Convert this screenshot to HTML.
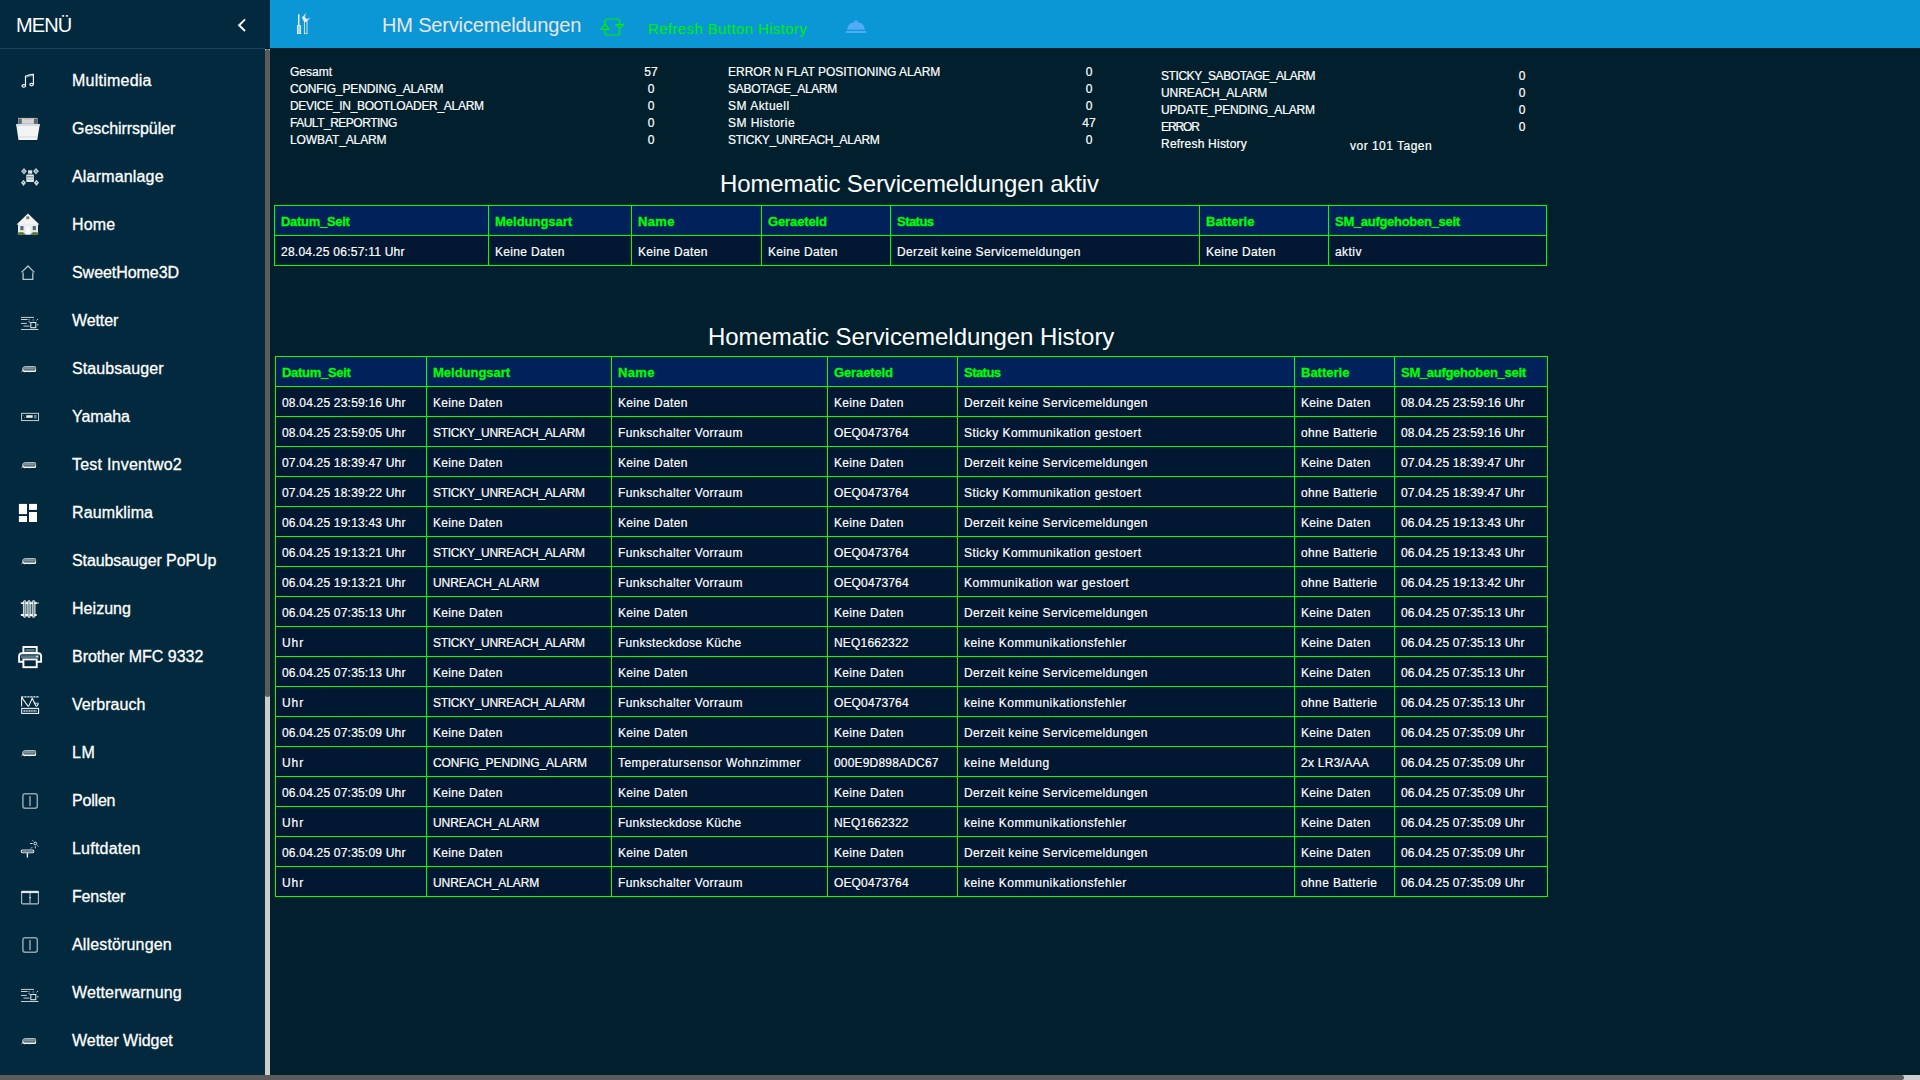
<!DOCTYPE html>
<html><head><meta charset="utf-8"><title>HM Servicemeldungen</title>
<style>
*{margin:0;padding:0;box-sizing:border-box}
html,body{width:1920px;height:1080px;overflow:hidden;background:#011f2d;font-family:"Liberation Sans",sans-serif;color:#fff}
.abs{position:absolute}
#side{position:absolute;left:0;top:0;width:265px;height:1075px;background:#02293d}
#sidehd{position:absolute;left:0;top:48px;width:265px;height:1px;background:#1d4257}
#menu{position:absolute;left:16px;top:13px;font-size:20px;line-height:24px;color:#fff;letter-spacing:-0.9px}
.mi{position:absolute;left:0;width:265px;height:48px}
.mi svg{position:absolute;left:0;top:4px}
.mi span{position:absolute;left:72px;top:16px;font-size:16px;line-height:18px;color:#fff;white-space:nowrap;-webkit-text-stroke:0.3px #fff}
#vs{position:absolute;left:265px;top:49px;width:5px;height:1026px;background:#cdcdcd}
#vsth{position:absolute;left:265px;top:49px;width:5px;height:648px;background:#5b5b5b;border-radius:2.5px}
#hs{position:absolute;left:0;top:1075px;width:1920px;height:5px;background:#cdcdcd}
#hsth{position:absolute;left:0;top:1075px;width:1904px;height:5px;background:#5b5b5b;border-radius:0 2.5px 2.5px 0}
#hdr{position:absolute;left:270px;top:0;width:1650px;height:48px;background:#0b97d6}
#title{position:absolute;left:382px;top:13px;font-size:20px;line-height:24px;color:#e8e6e6;white-space:nowrap}
#refr{position:absolute;left:648px;top:19px;font-size:15px;line-height:20px;color:#00f000;white-space:nowrap}
.sl{position:absolute;font-size:12px;line-height:17px;white-space:nowrap;color:#fff;-webkit-text-stroke:0.2px #fff}
.tt{position:absolute;font-size:24px;line-height:28px;white-space:nowrap;color:#fff}
.tbl{position:absolute}
.tbl div{position:absolute}
.thbg{background:#002159}
.tdbg{background:#021731}
.hl{left:0;height:1px;background:#00ff00}
.vl{top:0;width:1px;background:#00ff00}
.th{font-size:13px;font-weight:bold;color:#00ff00;line-height:30px;white-space:nowrap;-webkit-text-stroke:0.3px #00ff00}
.td{font-size:12px;color:#fff;line-height:30px;white-space:nowrap;-webkit-text-stroke:0.2px #fff}
</style></head><body>

<div id="side">
<div id="menu">MENÜ</div>
<svg class="abs" style="left:234px;top:16px" width="16" height="18" viewBox="0 0 16 18"><path d="M11 3.4L5.1 9.2L11 15" fill="none" stroke="#fff" stroke-width="1.9"/></svg>
<div id="sidehd"></div>
<div class="mi" style="top:56px"><svg width="40" height="40" viewBox="0 0 40 40"><g fill="none" stroke="#f2f5f7" stroke-width="1.2"><path d="M25.5 25.4V16.2Q29.5 14.6 33.4 14.4V24.2"/><ellipse cx="23.8" cy="25.9" rx="1.8" ry="1.2"/><ellipse cx="31.6" cy="24.6" rx="1.8" ry="1.2"/></g><path d="M26 17.3Q29.5 15.8 33 15.6" stroke="#9fb0b9" stroke-width="0.8" fill="none"/></svg><span style="letter-spacing:0.233px;">Multimedia</span></div>
<div class="mi" style="top:104px"><svg width="40" height="40" viewBox="0 0 40 40"><rect x="18" y="9.9" width="19.7" height="6.4" fill="#9ca1a6"/><rect x="21.8" y="10.4" width="12" height="5.2" fill="#d3d6d9"/><rect x="18.6" y="11" width="3" height="4.8" fill="#5f656b"/><rect x="34" y="11" width="3" height="4.8" fill="#5f656b"/><rect x="24" y="10.6" width="7" height="0.8" fill="#d9a0a8"/><path d="M16.1 16.1H39.9L37.2 32H18.5Z" fill="#f3f4f5"/><path d="M16.2 16.1H39.8L39.5 17.9H16.5Z" fill="#d9dcde"/><rect x="18.2" y="28.3" width="19.2" height="1.3" fill="#dcdee0"/></svg><span style="letter-spacing:-0.054px;">Geschirrspüler</span></div>
<div class="mi" style="top:152px"><svg width="40" height="40" viewBox="0 0 40 40"><g fill="#dfe5e8"><rect x="26.3" y="18.5" width="7.6" height="7.4" rx="0.5"/><rect x="28.1" y="14.3" width="4.1" height="3.4"/></g><rect x="27" y="20.4" width="6.2" height="0.9" fill="#566d79"/><rect x="27" y="22.8" width="6.2" height="0.9" fill="#a8b4ba"/><g fill="#c9d2d6"><path d="M21.1 15.2L24 12L26.9 15.2L24 18.5Z"/><path d="M33 15.2L36 12L38.9 15.2L36 18.5Z"/><path d="M21 26.8L23.5 23.7L26 26.8L23.5 30Z"/><path d="M33.9 26.8L36.4 23.7L39 26.8L36.4 30Z"/></g><g fill="#5b7380"><rect x="23.4" y="13.6" width="1.1" height="1.1"/><rect x="22.6" y="15.3" width="1.1" height="1.1"/><rect x="24.4" y="15.5" width="1.1" height="1.1"/><rect x="35.4" y="13.6" width="1.1" height="1.1"/><rect x="34.6" y="15.3" width="1.1" height="1.1"/><rect x="36.4" y="15.5" width="1.1" height="1.1"/><rect x="23" y="26" width="1" height="1"/><rect x="36" y="26" width="1" height="1"/></g></svg><span style="letter-spacing:0.175px;">Alarmanlage</span></div>
<div class="mi" style="top:200px"><svg width="40" height="40" viewBox="0 0 40 40"><path d="M16.5 20.4L28 9.4L39.4 20.4Z" fill="#f2f2f2"/><rect x="18" y="20" width="20" height="10.5" fill="#e9ebec"/><rect x="26.4" y="12.4" width="2.8" height="2.8" fill="#6f7b5a"/><rect x="20.3" y="22" width="3.2" height="4.2" fill="#5a6670"/><rect x="32.7" y="22" width="3.2" height="4.2" fill="#5a6670"/><rect x="25.8" y="22.5" width="4.2" height="8" fill="#fafafa"/><ellipse cx="21" cy="29.6" rx="3.6" ry="1.6" fill="#5f7a3a"/><ellipse cx="35" cy="29.6" rx="3.6" ry="1.6" fill="#5f7a3a"/></svg><span style="letter-spacing:0.167px;">Home</span></div>
<div class="mi" style="top:248px"><svg width="40" height="40" viewBox="0 0 40 40"><g fill="none" stroke="#b9c6cd" stroke-width="1.3"><path d="M21.5 20.4L28 14L34.3 20.4"/><path d="M23.1 20.4V27.3H32.8V20.4"/></g></svg><span style="letter-spacing:-0.050px;">SweetHome3D</span></div>
<div class="mi" style="top:296px"><svg width="40" height="40" viewBox="0 0 40 40"><g stroke="#dde4e8" stroke-width="0.9" fill="none"><path d="M21 17.4H34"/><path d="M21 19.5H27.5"/><path d="M21 23.4H26.8"/><path d="M23.5 26.1H29.5"/><path d="M21 29.5H38.5"/><rect x="30.8" y="22.5" width="5" height="5.2" stroke-width="1.1"/><path d="M36.6 20.3L38 19M29.7 20.3L28.6 19M33.2 19.3V20.6M37 24.8H38.5M28.4 21.3L30 22.5"/></g></svg><span style="letter-spacing:-0.100px;">Wetter</span></div>
<div class="mi" style="top:344px"><svg width="40" height="40" viewBox="0 0 40 40"><path d="M22.6 21.3Q22.6 18.5 25.2 18.5H34.8Q35.7 18.5 35.7 19.8V22.2Q35.7 23.4 34.6 23.4H24Q22.6 23.4 22.6 21.3Z" fill="#5e7785" stroke="#b9c6cc" stroke-width="0.9"/><path d="M23.5 19.6H34.6V20.6H23.5Z" fill="#8fa2ab"/><path d="M22.8 21.5Q23 23.3 24.3 23.3H34.8Q35.6 23.3 35.6 22" fill="none" stroke="#f7f9fa" stroke-width="1.2"/><path d="M20.8 24L22.6 23.4M24.2 24.3L24.8 24.6M30 23.8V24.3" stroke="#b7c3c9" stroke-width="0.6"/></svg><span style="letter-spacing:0.075px;">Staubsauger</span></div>
<div class="mi" style="top:392px"><svg width="40" height="40" viewBox="0 0 40 40"><rect x="21.6" y="17.3" width="17" height="7.3" fill="none" stroke="#d6dee2" stroke-width="0.9"/><rect x="26.2" y="19.2" width="6.5" height="2.6" fill="#e9eef0"/><circle cx="23.6" cy="19.2" r="0.4" fill="#c0c8cc"/><circle cx="24.5" cy="21.5" r="0.45" fill="#c0c8cc"/><rect x="34" y="18.9" width="2.6" height="3.6" fill="#6c8593"/></svg><span style="letter-spacing:-0.100px;">Yamaha</span></div>
<div class="mi" style="top:440px"><svg width="40" height="40" viewBox="0 0 40 40"><path d="M22.6 21.3Q22.6 18.5 25.2 18.5H34.8Q35.7 18.5 35.7 19.8V22.2Q35.7 23.4 34.6 23.4H24Q22.6 23.4 22.6 21.3Z" fill="#5e7785" stroke="#b9c6cc" stroke-width="0.9"/><path d="M23.5 19.6H34.6V20.6H23.5Z" fill="#8fa2ab"/><path d="M22.8 21.5Q23 23.3 24.3 23.3H34.8Q35.6 23.3 35.6 22" fill="none" stroke="#f7f9fa" stroke-width="1.2"/><path d="M20.8 24L22.6 23.4M24.2 24.3L24.8 24.6M30 23.8V24.3" stroke="#b7c3c9" stroke-width="0.6"/></svg><span style="letter-spacing:0.231px;">Test Inventwo2</span></div>
<div class="mi" style="top:488px"><svg width="40" height="40" viewBox="0 0 40 40"><g fill="#ffffff"><rect x="18.9" y="503.9" width="8.1" height="10.2" transform="translate(0,-492)"/><rect x="18.9" y="516.0" width="8.1" height="6.0" transform="translate(0,-492)"/><rect x="29.0" y="503.9" width="8.0" height="6.0" transform="translate(0,-492)"/><rect x="29.0" y="512.0" width="8.0" height="10.0" transform="translate(0,-492)"/></g></svg><span style="letter-spacing:0.125px;">Raumklima</span></div>
<div class="mi" style="top:536px"><svg width="40" height="40" viewBox="0 0 40 40"><path d="M22.6 21.3Q22.6 18.5 25.2 18.5H34.8Q35.7 18.5 35.7 19.8V22.2Q35.7 23.4 34.6 23.4H24Q22.6 23.4 22.6 21.3Z" fill="#5e7785" stroke="#b9c6cc" stroke-width="0.9"/><path d="M23.5 19.6H34.6V20.6H23.5Z" fill="#8fa2ab"/><path d="M22.8 21.5Q23 23.3 24.3 23.3H34.8Q35.6 23.3 35.6 22" fill="none" stroke="#f7f9fa" stroke-width="1.2"/><path d="M20.8 24L22.6 23.4M24.2 24.3L24.8 24.6M30 23.8V24.3" stroke="#b7c3c9" stroke-width="0.6"/></svg><span style="letter-spacing:-0.094px;">Staubsauger PoPUp</span></div>
<div class="mi" style="top:584px"><svg width="40" height="40" viewBox="0 0 40 40"><g stroke="#e9eef1" stroke-width="0.9" fill="#7a909b"><rect x="23.4" y="12.6" width="2.6" height="16.8" rx="1.3"/><rect x="27.7" y="12.6" width="2.6" height="16.8" rx="1.3"/><rect x="32.2" y="12.6" width="2.8" height="16.8" rx="1.3"/></g><g stroke="#f4f7f8" stroke-width="1.8" stroke-linecap="round"><path d="M21.6 15.1H23.4M26 15.1H27.7M30.3 15.1H32.2M35 15.1H36.5"/><path d="M21.6 27H23.4M26 27H27.7M30.3 27H32.2M35 27H36"/></g><circle cx="38" cy="15" r="0.8" fill="#c9d3d8"/></svg><span style="letter-spacing:0.042px;">Heizung</span></div>
<div class="mi" style="top:632px"><svg width="44" height="40" viewBox="0 0 44 40"><g fill="none" stroke="#ffffff" stroke-width="1.9"><rect x="23.4" y="11" width="13.3" height="5.8"/><path d="M23.4 25.8H19.1V20.2Q19.1 17.2 22 17.2H38.2Q41.1 17.2 41.1 20.2V25.8H36.7"/><rect x="23.4" y="23.4" width="13.3" height="7.8"/></g><rect x="21" y="19.3" width="18" height="3" fill="#5a7584"/><rect x="25.4" y="13" width="9.2" height="2.5" fill="#5a7584"/><circle cx="37" cy="20.3" r="0.9" fill="#fff"/></svg><span style="letter-spacing:-0.017px;">Brother MFC 9332</span></div>
<div class="mi" style="top:680px"><svg width="40" height="40" viewBox="0 0 40 40"><g fill="none" stroke="#eef2f4" stroke-width="1.1"><path d="M21.3 12.9H38.7" stroke-dasharray="2.2 0.8"/><path d="M21.6 13V22.6"/><path d="M21.9 13.6L27.6 21.6Q28.3 22.6 29 21.6L32.2 14.2L35.8 21.6Q36.5 22.6 37.3 21.6L38.4 19.5"/><path d="M33.8 19.2H38.7" stroke-width="0.8"/><rect x="21.7" y="24.4" width="16.9" height="5"/></g><rect x="23" y="25.7" width="14.3" height="2.4" fill="#587483"/><g fill="#cfd9de"><rect x="24" y="26.2" width="0.8" height="1.4"/><rect x="26.5" y="26.2" width="0.8" height="1.4"/><rect x="29" y="26.2" width="0.8" height="1.4"/><rect x="31.5" y="26.2" width="0.8" height="1.4"/><rect x="34" y="26.2" width="0.8" height="1.4"/></g></svg><span style="letter-spacing:0.062px;">Verbrauch</span></div>
<div class="mi" style="top:728px"><svg width="40" height="40" viewBox="0 0 40 40"><path d="M22.6 21.3Q22.6 18.5 25.2 18.5H34.8Q35.7 18.5 35.7 19.8V22.2Q35.7 23.4 34.6 23.4H24Q22.6 23.4 22.6 21.3Z" fill="#5e7785" stroke="#b9c6cc" stroke-width="0.9"/><path d="M23.5 19.6H34.6V20.6H23.5Z" fill="#8fa2ab"/><path d="M22.8 21.5Q23 23.3 24.3 23.3H34.8Q35.6 23.3 35.6 22" fill="none" stroke="#f7f9fa" stroke-width="1.2"/><path d="M20.8 24L22.6 23.4M24.2 24.3L24.8 24.6M30 23.8V24.3" stroke="#b7c3c9" stroke-width="0.6"/></svg><span style="letter-spacing:0.500px;">LM</span></div>
<div class="mi" style="top:776px"><svg width="40" height="40" viewBox="0 0 40 40"><g fill="none" stroke="#8fa3ae" stroke-width="1.5"><rect x="22.9" y="13.7" width="14.4" height="14.5" rx="2.2"/><path d="M30 16.1V26"/></g></svg><span style="letter-spacing:-0.200px;">Pollen</span></div>
<div class="mi" style="top:824px"><svg width="40" height="40" viewBox="0 0 40 40"><g fill="none" stroke="#e8eef1"><path d="M22.5 22Q21.2 22 21.2 23Q21.2 24.7 22.5 24.7H32.8Q33.8 24.7 33.8 23.2Q33.8 22 32.8 22Z" stroke-width="1.1"/><path d="M27.4 25V29.6" stroke-width="1.4"/><circle cx="35.3" cy="15.5" r="1.4" stroke-width="1"/><path d="M30.1 15.5H32.5M35.3 18.3V20.4M32.2 19.2L31 20.5M33.3 13.3L32.6 12.3M37.4 17.5L38.5 18.4" stroke-width="0.9"/></g><rect x="22.6" y="22.6" width="10.5" height="1.6" fill="#6d8591"/></svg><span style="letter-spacing:0.213px;">Luftdaten</span></div>
<div class="mi" style="top:872px"><svg width="40" height="40" viewBox="0 0 40 40"><g fill="none" stroke="#b3c1c8" stroke-width="1.1"><rect x="21.6" y="15.4" width="16.8" height="12.5" rx="0.8"/><path d="M30 16V27.4"/></g><path d="M21.3 16.1H38.7" stroke="#e3e9ec" stroke-width="2"/><rect x="29.3" y="21.2" width="1.6" height="0.9" fill="#fff"/></svg><span style="letter-spacing:-0.167px;">Fenster</span></div>
<div class="mi" style="top:920px"><svg width="40" height="40" viewBox="0 0 40 40"><g fill="none" stroke="#8fa3ae" stroke-width="1.5"><rect x="22.9" y="13.7" width="14.4" height="14.5" rx="2.2"/><path d="M30 16.1V26"/></g></svg><span style="letter-spacing:0.150px;">Allestörungen</span></div>
<div class="mi" style="top:968px"><svg width="40" height="40" viewBox="0 0 40 40"><g stroke="#dde4e8" stroke-width="0.9" fill="none"><path d="M21 17.4H34"/><path d="M21 19.5H27.5"/><path d="M21 23.4H26.8"/><path d="M23.5 26.1H29.5"/><path d="M21 29.5H38.5"/><rect x="30.8" y="22.5" width="5" height="5.2" stroke-width="1.1"/><path d="M36.6 20.3L38 19M29.7 20.3L28.6 19M33.2 19.3V20.6M37 24.8H38.5M28.4 21.3L30 22.5"/></g></svg><span style="letter-spacing:0.125px;">Wetterwarnung</span></div>
<div class="mi" style="top:1016px"><svg width="40" height="40" viewBox="0 0 40 40"><path d="M22.6 21.3Q22.6 18.5 25.2 18.5H34.8Q35.7 18.5 35.7 19.8V22.2Q35.7 23.4 34.6 23.4H24Q22.6 23.4 22.6 21.3Z" fill="#5e7785" stroke="#b9c6cc" stroke-width="0.9"/><path d="M23.5 19.6H34.6V20.6H23.5Z" fill="#8fa2ab"/><path d="M22.8 21.5Q23 23.3 24.3 23.3H34.8Q35.6 23.3 35.6 22" fill="none" stroke="#f7f9fa" stroke-width="1.2"/><path d="M20.8 24L22.6 23.4M24.2 24.3L24.8 24.6M30 23.8V24.3" stroke="#b7c3c9" stroke-width="0.6"/></svg><span style="letter-spacing:-0.025px;">Wetter Widget</span></div>
</div>
<div class="abs" style="left:265px;top:0;width:5px;height:48px;background:#02293d"></div>
<div id="vs"></div><div id="vsth"></div><div id="hs"></div><div id="hsth"></div>
<div id="hdr"></div>
<svg class="abs" style="left:290px;top:8px" width="28" height="32" viewBox="0 0 28 32"><g fill="#e8eaea"><rect x="8" y="6.2" width="1.5" height="11"/></g><rect x="7.4" y="17.6" width="3.2" height="8" fill="#a9d3ea" stroke="#e8eaea" stroke-width="0.9"/><rect x="14.4" y="13.6" width="2.6" height="12" fill="#0b97d6" stroke="#e8eaea" stroke-width="0.9"/><path d="M11.8 9.6L14.6 6.8L15.6 7.8L14.6 8.8L17 11.2L18 10.2L19 11L16.7 13.8H14Z" fill="#e8eaea"/><path d="M14.5 7L16 5.5M18.6 11.2L19.8 10" stroke="#e8eaea" stroke-width="0.9"/></svg>
<div id="title" style="letter-spacing:-0.167px;">HM Servicemeldungen</div>
<svg class="abs" style="left:596px;top:14px" width="32" height="26" viewBox="0 0 32 26"><g fill="none" stroke="#00f000" stroke-width="1.2" stroke-linejoin="round"><path d="M9 10.3V7.6Q9 5 11.6 5H21Q23.6 5 23.6 7.6V10.6"/><path d="M9 15.3V18.4Q9 21 11.6 21H21Q23.6 21 23.6 18.4V14.4"/><path d="M4.8 15.3H13.1L9 10.2Z"/><path d="M19.8 10.6H27.5L23.6 14.4Z"/></g></svg>
<div id="refr" style="letter-spacing:0.381px;">Refresh Button History</div>
<svg class="abs" style="left:846px;top:19px" width="22" height="16" viewBox="0 0 22 16"><g fill="#52acf5"><circle cx="10" cy="2.8" r="1.8"/><path d="M1 10.8Q1.6 3 10 3Q18.4 3 19 10.8Z"/><rect x="0" y="12" width="20" height="2"/></g></svg>
<div class="sl" style="left:290px;top:64px;letter-spacing:0.000px;">Gesamt</div>
<div class="sl" style="left:611px;width:80px;text-align:center;top:64px">57</div>
<div class="sl" style="left:290px;top:81px;letter-spacing:-0.132px;">CONFIG_PENDING_ALARM</div>
<div class="sl" style="left:611px;width:80px;text-align:center;top:81px">0</div>
<div class="sl" style="left:290px;top:98px;letter-spacing:-0.296px;">DEVICE_IN_BOOTLOADER_ALARM</div>
<div class="sl" style="left:611px;width:80px;text-align:center;top:98px">0</div>
<div class="sl" style="left:290px;top:115px;letter-spacing:-0.493px;">FAULT_REPORTING</div>
<div class="sl" style="left:611px;width:80px;text-align:center;top:115px">0</div>
<div class="sl" style="left:290px;top:132px;letter-spacing:-0.109px;">LOWBAT_ALARM</div>
<div class="sl" style="left:611px;width:80px;text-align:center;top:132px">0</div>
<div class="sl" style="left:728px;top:64px;letter-spacing:-0.021px;">ERROR N FLAT POSITIONING ALARM</div>
<div class="sl" style="left:1049px;width:80px;text-align:center;top:64px">0</div>
<div class="sl" style="left:728px;top:81px;letter-spacing:-0.292px;">SABOTAGE_ALARM</div>
<div class="sl" style="left:1049px;width:80px;text-align:center;top:81px">0</div>
<div class="sl" style="left:728px;top:98px;letter-spacing:0.489px;">SM Aktuell</div>
<div class="sl" style="left:1049px;width:80px;text-align:center;top:98px">0</div>
<div class="sl" style="left:728px;top:115px;letter-spacing:0.460px;">SM Historie</div>
<div class="sl" style="left:1049px;width:80px;text-align:center;top:115px">47</div>
<div class="sl" style="left:728px;top:132px;letter-spacing:-0.295px;">STICKY_UNREACH_ALARM</div>
<div class="sl" style="left:1049px;width:80px;text-align:center;top:132px">0</div>
<div class="sl" style="left:1161px;top:68px;letter-spacing:-0.430px;">STICKY_SABOTAGE_ALARM</div>
<div class="sl" style="left:1482px;width:80px;text-align:center;top:68px">0</div>
<div class="sl" style="left:1161px;top:85px;letter-spacing:-0.092px;">UNREACH_ALARM</div>
<div class="sl" style="left:1482px;width:80px;text-align:center;top:85px">0</div>
<div class="sl" style="left:1161px;top:102px;letter-spacing:-0.163px;">UPDATE_PENDING_ALARM</div>
<div class="sl" style="left:1482px;width:80px;text-align:center;top:102px">0</div>
<div class="sl" style="left:1161px;top:119px;letter-spacing:-1.125px;">ERROR</div>
<div class="sl" style="left:1482px;width:80px;text-align:center;top:119px">0</div>
<div class="sl" style="left:1161px;top:136px;letter-spacing:0.221px;">Refresh History</div>
<div class="sl" style="left:1350px;top:138px;letter-spacing:0.483px;">vor 101 Tagen</div>
<div class="tt" style="left:720px;top:170px;letter-spacing:-0.123px;">Homematic Servicemeldungen aktiv</div>
<div class="tt" style="left:708px;top:323px;letter-spacing:-0.055px;">Homematic Servicemeldungen History</div>
<div class="tbl" style="left:274px;top:205px;width:1273px;height:61px">
<div class="thbg" style="left:0;top:0;width:1273px;height:31px"></div>
<div class="tdbg" style="left:0;top:30px;width:1273px;height:31px"></div>
<div class="hl" style="top:0px;width:1273px"></div>
<div class="hl" style="top:30px;width:1273px"></div>
<div class="hl" style="top:60px;width:1273px"></div>
<div class="vl" style="left:0px;height:61px"></div>
<div class="vl" style="left:214px;height:61px"></div>
<div class="vl" style="left:357px;height:61px"></div>
<div class="vl" style="left:487px;height:61px"></div>
<div class="vl" style="left:616px;height:61px"></div>
<div class="vl" style="left:925px;height:61px"></div>
<div class="vl" style="left:1054px;height:61px"></div>
<div class="vl" style="left:1272px;height:61px"></div>
<div class="th" style="left:7px;top:2px;letter-spacing:-0.289px;">Datum_Seit</div>
<div class="th" style="left:221px;top:2px;letter-spacing:-0.010px;">Meldungsart</div>
<div class="th" style="left:364px;top:2px;letter-spacing:0.333px;">Name</div>
<div class="th" style="left:494px;top:2px;letter-spacing:-0.125px;">Geraeteld</div>
<div class="th" style="left:623px;top:2px;letter-spacing:-0.540px;">Status</div>
<div class="th" style="left:932px;top:2px;letter-spacing:0.000px;">Batterie</div>
<div class="th" style="left:1061px;top:2px;letter-spacing:-0.294px;">SM_aufgehoben_seit</div>
<div class="td" style="left:7px;top:32px;letter-spacing:0.250px;">28.04.25 06:57:11 Uhr</div>
<div class="td" style="left:221px;top:32px;letter-spacing:0.330px;">Keine Daten</div>
<div class="td" style="left:364px;top:32px;letter-spacing:0.330px;">Keine Daten</div>
<div class="td" style="left:494px;top:32px;letter-spacing:0.330px;">Keine Daten</div>
<div class="td" style="left:623px;top:32px;letter-spacing:0.369px;">Derzeit keine Servicemeldungen</div>
<div class="td" style="left:932px;top:32px;letter-spacing:0.330px;">Keine Daten</div>
<div class="td" style="left:1061px;top:32px;letter-spacing:0.450px;">aktiv</div>
</div>
<div class="tbl" style="left:275px;top:356px;width:1273px;height:541px">
<div class="thbg" style="left:0;top:0;width:1273px;height:31px"></div>
<div class="tdbg" style="left:0;top:30px;width:1273px;height:511px"></div>
<div class="hl" style="top:0px;width:1273px"></div>
<div class="hl" style="top:30px;width:1273px"></div>
<div class="hl" style="top:60px;width:1273px"></div>
<div class="hl" style="top:90px;width:1273px"></div>
<div class="hl" style="top:120px;width:1273px"></div>
<div class="hl" style="top:150px;width:1273px"></div>
<div class="hl" style="top:180px;width:1273px"></div>
<div class="hl" style="top:210px;width:1273px"></div>
<div class="hl" style="top:240px;width:1273px"></div>
<div class="hl" style="top:270px;width:1273px"></div>
<div class="hl" style="top:300px;width:1273px"></div>
<div class="hl" style="top:330px;width:1273px"></div>
<div class="hl" style="top:360px;width:1273px"></div>
<div class="hl" style="top:390px;width:1273px"></div>
<div class="hl" style="top:420px;width:1273px"></div>
<div class="hl" style="top:450px;width:1273px"></div>
<div class="hl" style="top:480px;width:1273px"></div>
<div class="hl" style="top:510px;width:1273px"></div>
<div class="hl" style="top:540px;width:1273px"></div>
<div class="vl" style="left:0px;height:541px"></div>
<div class="vl" style="left:151px;height:541px"></div>
<div class="vl" style="left:336px;height:541px"></div>
<div class="vl" style="left:552px;height:541px"></div>
<div class="vl" style="left:682px;height:541px"></div>
<div class="vl" style="left:1019px;height:541px"></div>
<div class="vl" style="left:1119px;height:541px"></div>
<div class="vl" style="left:1272px;height:541px"></div>
<div class="th" style="left:7px;top:2px;letter-spacing:-0.289px;">Datum_Seit</div>
<div class="th" style="left:158px;top:2px;letter-spacing:-0.010px;">Meldungsart</div>
<div class="th" style="left:343px;top:2px;letter-spacing:0.333px;">Name</div>
<div class="th" style="left:559px;top:2px;letter-spacing:-0.125px;">Geraeteld</div>
<div class="th" style="left:689px;top:2px;letter-spacing:-0.540px;">Status</div>
<div class="th" style="left:1026px;top:2px;letter-spacing:0.000px;">Batterie</div>
<div class="th" style="left:1126px;top:2px;letter-spacing:-0.294px;">SM_aufgehoben_seit</div>
<div class="td" style="left:7px;top:32px;letter-spacing:0.200px;">08.04.25 23:59:16 Uhr</div>
<div class="td" style="left:158px;top:32px;letter-spacing:0.330px;">Keine Daten</div>
<div class="td" style="left:343px;top:32px;letter-spacing:0.330px;">Keine Daten</div>
<div class="td" style="left:559px;top:32px;letter-spacing:0.330px;">Keine Daten</div>
<div class="td" style="left:689px;top:32px;letter-spacing:0.369px;">Derzeit keine Servicemeldungen</div>
<div class="td" style="left:1026px;top:32px;letter-spacing:0.330px;">Keine Daten</div>
<div class="td" style="left:1126px;top:32px;letter-spacing:0.200px;">08.04.25 23:59:16 Uhr</div>
<div class="td" style="left:7px;top:62px;letter-spacing:0.200px;">08.04.25 23:59:05 Uhr</div>
<div class="td" style="left:158px;top:62px;letter-spacing:-0.279px;">STICKY_UNREACH_ALARM</div>
<div class="td" style="left:343px;top:62px;letter-spacing:0.368px;">Funkschalter Vorraum</div>
<div class="td" style="left:559px;top:62px;letter-spacing:0.133px;">OEQ0473764</div>
<div class="td" style="left:689px;top:62px;letter-spacing:0.443px;">Sticky Kommunikation gestoert</div>
<div class="td" style="left:1026px;top:62px;letter-spacing:0.375px;">ohne Batterie</div>
<div class="td" style="left:1126px;top:62px;letter-spacing:0.200px;">08.04.25 23:59:16 Uhr</div>
<div class="td" style="left:7px;top:92px;letter-spacing:0.200px;">07.04.25 18:39:47 Uhr</div>
<div class="td" style="left:158px;top:92px;letter-spacing:0.330px;">Keine Daten</div>
<div class="td" style="left:343px;top:92px;letter-spacing:0.330px;">Keine Daten</div>
<div class="td" style="left:559px;top:92px;letter-spacing:0.330px;">Keine Daten</div>
<div class="td" style="left:689px;top:92px;letter-spacing:0.369px;">Derzeit keine Servicemeldungen</div>
<div class="td" style="left:1026px;top:92px;letter-spacing:0.330px;">Keine Daten</div>
<div class="td" style="left:1126px;top:92px;letter-spacing:0.200px;">07.04.25 18:39:47 Uhr</div>
<div class="td" style="left:7px;top:122px;letter-spacing:0.200px;">07.04.25 18:39:22 Uhr</div>
<div class="td" style="left:158px;top:122px;letter-spacing:-0.279px;">STICKY_UNREACH_ALARM</div>
<div class="td" style="left:343px;top:122px;letter-spacing:0.368px;">Funkschalter Vorraum</div>
<div class="td" style="left:559px;top:122px;letter-spacing:0.133px;">OEQ0473764</div>
<div class="td" style="left:689px;top:122px;letter-spacing:0.443px;">Sticky Kommunikation gestoert</div>
<div class="td" style="left:1026px;top:122px;letter-spacing:0.375px;">ohne Batterie</div>
<div class="td" style="left:1126px;top:122px;letter-spacing:0.200px;">07.04.25 18:39:47 Uhr</div>
<div class="td" style="left:7px;top:152px;letter-spacing:0.200px;">06.04.25 19:13:43 Uhr</div>
<div class="td" style="left:158px;top:152px;letter-spacing:0.330px;">Keine Daten</div>
<div class="td" style="left:343px;top:152px;letter-spacing:0.330px;">Keine Daten</div>
<div class="td" style="left:559px;top:152px;letter-spacing:0.330px;">Keine Daten</div>
<div class="td" style="left:689px;top:152px;letter-spacing:0.369px;">Derzeit keine Servicemeldungen</div>
<div class="td" style="left:1026px;top:152px;letter-spacing:0.330px;">Keine Daten</div>
<div class="td" style="left:1126px;top:152px;letter-spacing:0.200px;">06.04.25 19:13:43 Uhr</div>
<div class="td" style="left:7px;top:182px;letter-spacing:0.200px;">06.04.25 19:13:21 Uhr</div>
<div class="td" style="left:158px;top:182px;letter-spacing:-0.279px;">STICKY_UNREACH_ALARM</div>
<div class="td" style="left:343px;top:182px;letter-spacing:0.368px;">Funkschalter Vorraum</div>
<div class="td" style="left:559px;top:182px;letter-spacing:0.133px;">OEQ0473764</div>
<div class="td" style="left:689px;top:182px;letter-spacing:0.443px;">Sticky Kommunikation gestoert</div>
<div class="td" style="left:1026px;top:182px;letter-spacing:0.375px;">ohne Batterie</div>
<div class="td" style="left:1126px;top:182px;letter-spacing:0.200px;">06.04.25 19:13:43 Uhr</div>
<div class="td" style="left:7px;top:212px;letter-spacing:0.200px;">06.04.25 19:13:21 Uhr</div>
<div class="td" style="left:158px;top:212px;letter-spacing:-0.083px;">UNREACH_ALARM</div>
<div class="td" style="left:343px;top:212px;letter-spacing:0.368px;">Funkschalter Vorraum</div>
<div class="td" style="left:559px;top:212px;letter-spacing:0.133px;">OEQ0473764</div>
<div class="td" style="left:689px;top:212px;letter-spacing:0.504px;">Kommunikation war gestoert</div>
<div class="td" style="left:1026px;top:212px;letter-spacing:0.375px;">ohne Batterie</div>
<div class="td" style="left:1126px;top:212px;letter-spacing:0.200px;">06.04.25 19:13:42 Uhr</div>
<div class="td" style="left:7px;top:242px;letter-spacing:0.200px;">06.04.25 07:35:13 Uhr</div>
<div class="td" style="left:158px;top:242px;letter-spacing:0.330px;">Keine Daten</div>
<div class="td" style="left:343px;top:242px;letter-spacing:0.330px;">Keine Daten</div>
<div class="td" style="left:559px;top:242px;letter-spacing:0.330px;">Keine Daten</div>
<div class="td" style="left:689px;top:242px;letter-spacing:0.369px;">Derzeit keine Servicemeldungen</div>
<div class="td" style="left:1026px;top:242px;letter-spacing:0.330px;">Keine Daten</div>
<div class="td" style="left:1126px;top:242px;letter-spacing:0.200px;">06.04.25 07:35:13 Uhr</div>
<div class="td" style="left:7px;top:272px;letter-spacing:0.900px;">Uhr</div>
<div class="td" style="left:158px;top:272px;letter-spacing:-0.279px;">STICKY_UNREACH_ALARM</div>
<div class="td" style="left:343px;top:272px;letter-spacing:0.278px;">Funksteckdose Küche</div>
<div class="td" style="left:559px;top:272px;letter-spacing:0.200px;">NEQ1662322</div>
<div class="td" style="left:689px;top:272px;letter-spacing:0.464px;">keine Kommunikationsfehler</div>
<div class="td" style="left:1026px;top:272px;letter-spacing:0.330px;">Keine Daten</div>
<div class="td" style="left:1126px;top:272px;letter-spacing:0.200px;">06.04.25 07:35:13 Uhr</div>
<div class="td" style="left:7px;top:302px;letter-spacing:0.200px;">06.04.25 07:35:13 Uhr</div>
<div class="td" style="left:158px;top:302px;letter-spacing:0.330px;">Keine Daten</div>
<div class="td" style="left:343px;top:302px;letter-spacing:0.330px;">Keine Daten</div>
<div class="td" style="left:559px;top:302px;letter-spacing:0.330px;">Keine Daten</div>
<div class="td" style="left:689px;top:302px;letter-spacing:0.369px;">Derzeit keine Servicemeldungen</div>
<div class="td" style="left:1026px;top:302px;letter-spacing:0.330px;">Keine Daten</div>
<div class="td" style="left:1126px;top:302px;letter-spacing:0.200px;">06.04.25 07:35:13 Uhr</div>
<div class="td" style="left:7px;top:332px;letter-spacing:0.900px;">Uhr</div>
<div class="td" style="left:158px;top:332px;letter-spacing:-0.279px;">STICKY_UNREACH_ALARM</div>
<div class="td" style="left:343px;top:332px;letter-spacing:0.368px;">Funkschalter Vorraum</div>
<div class="td" style="left:559px;top:332px;letter-spacing:0.133px;">OEQ0473764</div>
<div class="td" style="left:689px;top:332px;letter-spacing:0.464px;">keine Kommunikationsfehler</div>
<div class="td" style="left:1026px;top:332px;letter-spacing:0.375px;">ohne Batterie</div>
<div class="td" style="left:1126px;top:332px;letter-spacing:0.200px;">06.04.25 07:35:13 Uhr</div>
<div class="td" style="left:7px;top:362px;letter-spacing:0.200px;">06.04.25 07:35:09 Uhr</div>
<div class="td" style="left:158px;top:362px;letter-spacing:0.330px;">Keine Daten</div>
<div class="td" style="left:343px;top:362px;letter-spacing:0.330px;">Keine Daten</div>
<div class="td" style="left:559px;top:362px;letter-spacing:0.330px;">Keine Daten</div>
<div class="td" style="left:689px;top:362px;letter-spacing:0.369px;">Derzeit keine Servicemeldungen</div>
<div class="td" style="left:1026px;top:362px;letter-spacing:0.330px;">Keine Daten</div>
<div class="td" style="left:1126px;top:362px;letter-spacing:0.200px;">06.04.25 07:35:09 Uhr</div>
<div class="td" style="left:7px;top:392px;letter-spacing:0.900px;">Uhr</div>
<div class="td" style="left:158px;top:392px;letter-spacing:-0.105px;">CONFIG_PENDING_ALARM</div>
<div class="td" style="left:343px;top:392px;letter-spacing:0.462px;">Temperatursensor Wohnzimmer</div>
<div class="td" style="left:559px;top:392px;letter-spacing:0.185px;">000E9D898ADC67</div>
<div class="td" style="left:689px;top:392px;letter-spacing:0.600px;">keine Meldung</div>
<div class="td" style="left:1026px;top:392px;letter-spacing:0.256px;">2x LR3/AAA</div>
<div class="td" style="left:1126px;top:392px;letter-spacing:0.200px;">06.04.25 07:35:09 Uhr</div>
<div class="td" style="left:7px;top:422px;letter-spacing:0.200px;">06.04.25 07:35:09 Uhr</div>
<div class="td" style="left:158px;top:422px;letter-spacing:0.330px;">Keine Daten</div>
<div class="td" style="left:343px;top:422px;letter-spacing:0.330px;">Keine Daten</div>
<div class="td" style="left:559px;top:422px;letter-spacing:0.330px;">Keine Daten</div>
<div class="td" style="left:689px;top:422px;letter-spacing:0.369px;">Derzeit keine Servicemeldungen</div>
<div class="td" style="left:1026px;top:422px;letter-spacing:0.330px;">Keine Daten</div>
<div class="td" style="left:1126px;top:422px;letter-spacing:0.200px;">06.04.25 07:35:09 Uhr</div>
<div class="td" style="left:7px;top:452px;letter-spacing:0.900px;">Uhr</div>
<div class="td" style="left:158px;top:452px;letter-spacing:-0.083px;">UNREACH_ALARM</div>
<div class="td" style="left:343px;top:452px;letter-spacing:0.278px;">Funksteckdose Küche</div>
<div class="td" style="left:559px;top:452px;letter-spacing:0.200px;">NEQ1662322</div>
<div class="td" style="left:689px;top:452px;letter-spacing:0.464px;">keine Kommunikationsfehler</div>
<div class="td" style="left:1026px;top:452px;letter-spacing:0.330px;">Keine Daten</div>
<div class="td" style="left:1126px;top:452px;letter-spacing:0.200px;">06.04.25 07:35:09 Uhr</div>
<div class="td" style="left:7px;top:482px;letter-spacing:0.200px;">06.04.25 07:35:09 Uhr</div>
<div class="td" style="left:158px;top:482px;letter-spacing:0.330px;">Keine Daten</div>
<div class="td" style="left:343px;top:482px;letter-spacing:0.330px;">Keine Daten</div>
<div class="td" style="left:559px;top:482px;letter-spacing:0.330px;">Keine Daten</div>
<div class="td" style="left:689px;top:482px;letter-spacing:0.369px;">Derzeit keine Servicemeldungen</div>
<div class="td" style="left:1026px;top:482px;letter-spacing:0.330px;">Keine Daten</div>
<div class="td" style="left:1126px;top:482px;letter-spacing:0.200px;">06.04.25 07:35:09 Uhr</div>
<div class="td" style="left:7px;top:512px;letter-spacing:0.900px;">Uhr</div>
<div class="td" style="left:158px;top:512px;letter-spacing:-0.083px;">UNREACH_ALARM</div>
<div class="td" style="left:343px;top:512px;letter-spacing:0.368px;">Funkschalter Vorraum</div>
<div class="td" style="left:559px;top:512px;letter-spacing:0.133px;">OEQ0473764</div>
<div class="td" style="left:689px;top:512px;letter-spacing:0.464px;">keine Kommunikationsfehler</div>
<div class="td" style="left:1026px;top:512px;letter-spacing:0.375px;">ohne Batterie</div>
<div class="td" style="left:1126px;top:512px;letter-spacing:0.200px;">06.04.25 07:35:09 Uhr</div>
</div>
</body></html>
